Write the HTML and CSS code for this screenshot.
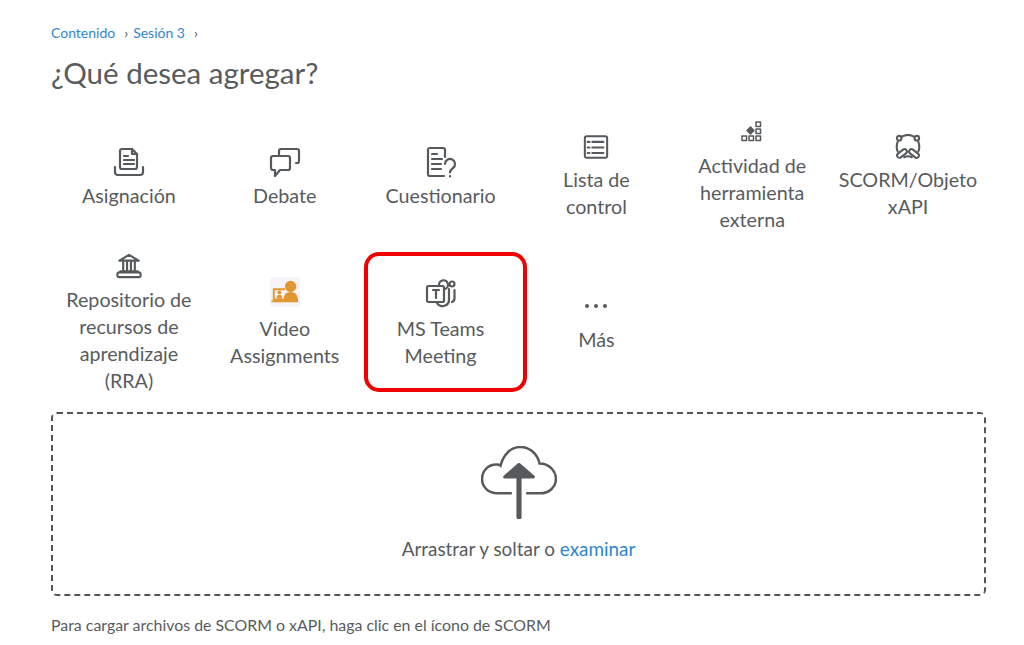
FILE: index.html
```html
<!DOCTYPE html>
<html lang="es">
<head>
  <meta charset="UTF-8">
  <meta name="viewport" content="width=device-width, initial-scale=1.0">
  <title>¿Qué desea agregar?</title>
  <link rel="stylesheet" href="styles.css">
</head>
<body>
  <div class="container">
    <nav class="breadcrumb">
      <a href="#">Contenido</a><span class="sep">›</span><a href="#">Sesión 3</a><span class="sep">›</span>
    </nav>
    <h1>¿Qué desea agregar?</h1>

    <div class="tools">
      <div class="tool">
        <svg class="icon" viewBox="0 0 32 32"><path d="M7 21V5a2 2 0 0 1 2-2h10l5 5v13a2 2 0 0 1-2 2H9a2 2 0 0 1-2-2z"/><path d="M19 3v5h5M11 10h4M11 14h10M11 18h10"/><path d="M2 21v5a3 3 0 0 0 3 3h22a3 3 0 0 0 3-3v-5"/></svg>
        <span>Asignación</span>
      </div>
      <div class="tool">
        <svg class="icon" viewBox="0 0 32 32"><path d="M10 9V5a2 2 0 0 1 2-2h16a2 2 0 0 1 2 2v10a2 2 0 0 1-2 2h-1"/><path d="M4 10h15a2 2 0 0 1 2 2v10a2 2 0 0 1-2 2H11l-5 6v-6H4a2 2 0 0 1-2-2V12a2 2 0 0 1 2-2z"/></svg>
        <span>Debate</span>
      </div>
      <div class="tool">
        <svg class="icon" viewBox="0 0 32 32"><path d="M19 30H5a2 2 0 0 1-2-2V4a2 2 0 0 1 2-2h13a2 2 0 0 1 2 2v7"/><path d="M7 8h5M7 13h10M7 18h9M7 23h9"/><path d="M20 18a5 5 0 1 1 8 4c-2 1.500-3 2.500-3 4.500M25 30v.5"/></svg>
        <span>Cuestionario</span>
      </div>
      <div class="tool compact">
        <svg class="icon" viewBox="3 2 28 27"><rect x="5" y="4" width="24" height="23" rx="2"/><path d="M13 10h12M13 16h12M13 22h12M8 10h2M8 16h2M8 22h2"/></svg>
        <span>Lista de<br>control</span>
      </div>
      <div class="tool compact">
        <svg class="icon thin" viewBox="4 1 26 26"><rect x="21" y="3" width="4.500" height="4.500"/><rect x="21" y="10" width="4.500" height="4.500"/><rect x="21" y="17" width="4.500" height="4.500"/><rect x="14" y="17" width="4.500" height="4.500"/><rect x="7" y="17" width="4.500" height="4.500"/><path class="solid" d="M15.500 8l3.500 3.500-3.500 3.500-3.500-3.500z"/></svg>
        <span>Actividad de herramienta externa</span>
      </div>
      <div class="tool compact">
        <svg class="icon" viewBox="2 2 28 28"><path d="M9 5a14 14 0 0 1 14 0M5 10c-1.500 4-1.500 8 0 11M27 10c1.500 4 1.500 8 0 11M12 27c3-1.500 5-1.500 8 0"/><circle cx="6.500" cy="6.500" r="2.500"/><circle cx="25.500" cy="6.500" r="2.500"/><rect x="3.500" y="20.500" width="12" height="5" rx="2.500" transform="rotate(-38 9.500 23)"/><rect x="16.500" y="20.500" width="12" height="5" rx="2.500" transform="rotate(38 22.500 23)"/></svg>
        <span>SCORM/Objeto xAPI</span>
      </div>
      <div class="tool">
        <svg class="icon" viewBox="0 0 32 32"><path d="M6 10L16 4l10 6zM6 10h20M10 11v10M14 11v10M18 11v10M22 11v10M7 21h18"/><rect x="4" y="22" width="24" height="5" rx="2"/></svg>
        <span>Repositorio de recursos de aprendizaje (RRA)</span>
      </div>
      <div class="tool">
        <svg class="video-icon" viewBox="0 0 32 32">
          <rect width="32" height="32" rx="2" fill="#f6f4f8"/>
          <circle cx="22" cy="10" r="6" fill="#e1962f"/>
          <path d="M14 27c0-8 3-11 8-11s8 3 8 11z" fill="#e1962f"/>
          <path d="M3 12h13v2H5v9h9v2H3zM1 25h13v2H2z" fill="#e1962f"/>
          <circle cx="10" cy="16.500" r="2" fill="#e1962f"/>
          <path d="M7 23c0-3 1-4 3-4s3 1 3 4z" fill="#e1962f"/>
        </svg>
        <span>Video Assignments</span>
      </div>
      <div class="tool selected">
        <svg class="icon" viewBox="0 0 32 32"><rect x="2" y="9" width="17" height="16" rx="1.500"/><path d="M8 13h6M11 13v8"/><path d="M14 8a4.500 4.500 0 1 1 6 4M24 12v10a6.500 6.500 0 0 1-12 4"/><circle cx="27" cy="7" r="2.500"/><path d="M29.500 13v8a4 4 0 0 1-2.500 4"/></svg>
        <span>MS Teams Meeting</span>
      </div>
      <div class="tool">
        <div class="dots"><i></i><i></i><i></i></div>
        <span>Más</span>
      </div>
    </div>

    <div class="dropzone">
      <svg class="cloud" viewBox="1 1 74 71">
        <path class="outline" d="M30 47H17C8 47 2 41 2 33s6-14 14-14c2 0 3 0 4 1C23 9 30 2 39 2c10 0 17 7 19 16 9 0 16 7 16 15s-7 14-15 14H46"/>
        <path class="arrow" d="M38 32v38"/>
        <path class="head" d="M38 19l14 12H24z"/>
      </svg>
      <p>Arrastrar y soltar o <a href="#">examinar</a></p>
    </div>

    <p class="note">Para cargar archivos de SCORM o xAPI, haga clic en el ícono de SCORM</p>
  </div>
</body>
</html>
```

FILE: styles.css
```css
body {
  font-family: Lato, "Open Sans", sans-serif;
  margin: 0;
  background-color: #fff;
  color: #585b5e;
}
a {
  color: #2f86cf;
  text-decoration: none;
}
.container {
  padding: 24px 38px 0 51px;
}
.breadcrumb {
  font-size: 14px;
  line-height: 18px;
}
.sep {
  margin: 0 5px 0 9px;
  color: #555;
}
h1 {
  font-size: 29.500px;
  font-weight: 400;
  line-height: 36px;
  margin: 13px 0 0;
}
.tools {
  display: grid;
  grid-template-columns: repeat(6, 1fr);
  grid-template-rows: 147px 143px;
  margin-top: 13px;
}
.tool {
  display: flex;
  flex-direction: column;
  align-items: center;
  justify-content: center;
  position: relative;
  text-align: center;
  font-size: 19.700px;
  line-height: 27px;
}
.tool span {
  display: block;
  width: 150px;
}
.icon {
  width: 32px;
  height: 32px;
  margin-bottom: 4px;
  fill: none;
  stroke: #565a5c;
  stroke-width: 2.200;
  stroke-linecap: round;
  stroke-linejoin: round;
}
.compact .icon {
  width: 26px;
  height: 26px;
  margin-bottom: 6px;
}
.compact span {
  margin-bottom: 2px;
}
.selected .icon {
  margin-bottom: 6px;
}
.thin {
  stroke-width: 1.500;
}
.solid {
  fill: #565a5c;
}
.video-icon {
  width: 30px;
  height: 30px;
  margin-bottom: 8px;
}
.dots {
  display: flex;
  gap: 5px;
  height: 28px;
  margin-bottom: 6px;
  align-items: center;
}
.dots i {
  width: 4px;
  height: 4px;
  border-radius: 50%;
  background-color: #565a5c;
}
.selected::after {
  content: "";
  position: absolute;
  top: 1px;
  bottom: 2px;
  left: 1px;
  right: -9px;
  border: 4px solid #f00000;
  border-radius: 15px;
}
.dropzone {
  box-sizing: border-box;
  height: 184px;
  margin-top: 18px;
  border: 2px dashed #555;
  border-radius: 6px;
  display: flex;
  flex-direction: column;
  align-items: center;
  padding-top: 32px;
}
.cloud {
  width: 76px;
  height: 73px;
}
.outline {
  fill: none;
  stroke: #565a5c;
  stroke-width: 2.500;
  stroke-linecap: round;
}
.arrow {
  stroke: #565a5c;
  stroke-width: 5;
  stroke-linecap: round;
}
.head {
  fill: #565a5c;
  stroke: #565a5c;
  stroke-width: 3;
  stroke-linejoin: round;
}
.dropzone p {
  font-size: 18.900px;
  line-height: 24px;
  margin: 18px 0 0;
}
.note {
  font-size: 15.900px;
  line-height: 20px;
  margin: 19px 0 0;
}
```
